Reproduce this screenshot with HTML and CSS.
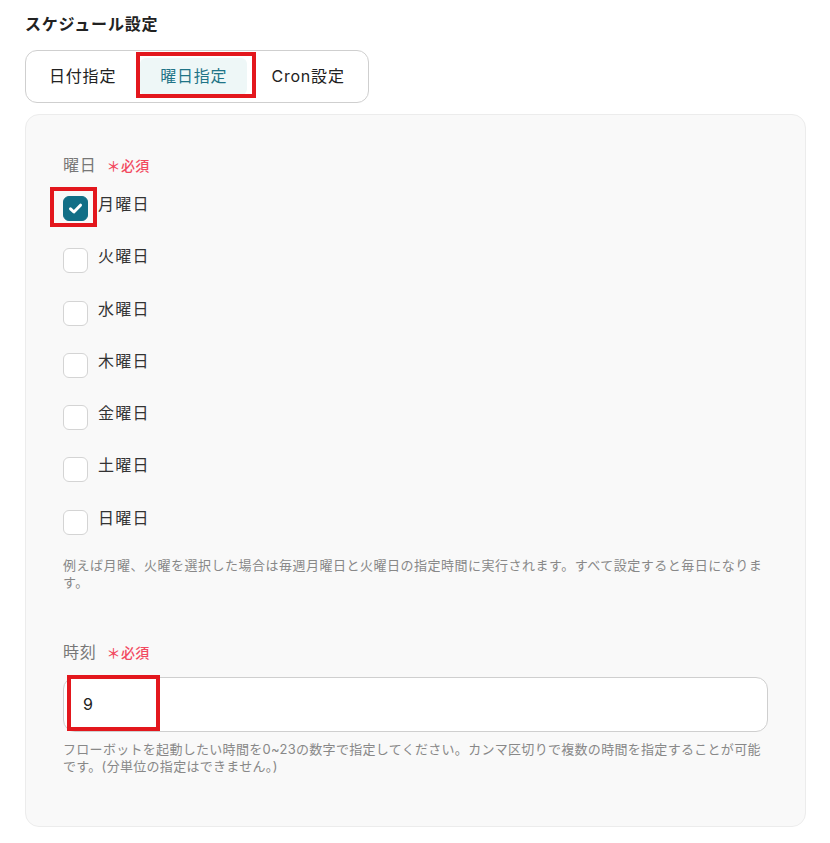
FILE: index.html
```html
<!DOCTYPE html>
<html lang="ja">
<head>
<meta charset="utf-8">
<title>スケジュール設定</title>
<link rel="stylesheet" href="styles.css">
</head>
<body>
<div class="page">
  <h2 class="title">スケジュール設定</h2>
  <div class="tabs">
    <div class="tab">日付指定</div>
    <div class="tab tab-active">曜日指定<span class="mark mark-tab"></span></div>
    <div class="tab">Cron設定</div>
  </div>

  <div class="panel">
    <div class="field-label">曜日<span class="req">＊必須</span></div>
    <div class="days">
      <label class="day">
        <span class="box box-checked">
          <svg viewBox="0 0 25 25" width="25" height="25"><path d="M7.5 12.8l3.4 3.2 6.6-6.8" fill="none" stroke="#fff" stroke-width="3" stroke-linecap="round" stroke-linejoin="round"/></svg>
          <span class="mark mark-box"></span>
        </span>
        <span class="day-text">月曜日</span>
      </label>
      <label class="day"><span class="box"></span><span class="day-text">火曜日</span></label>
      <label class="day"><span class="box"></span><span class="day-text">水曜日</span></label>
      <label class="day"><span class="box"></span><span class="day-text">木曜日</span></label>
      <label class="day"><span class="box"></span><span class="day-text">金曜日</span></label>
      <label class="day"><span class="box"></span><span class="day-text">土曜日</span></label>
      <label class="day"><span class="box"></span><span class="day-text">日曜日</span></label>
    </div>
    <p class="help help-days">例えば月曜、火曜を選択した場合は毎週月曜日と火曜日の指定時間に実行されます。すべて設定すると毎日になります。</p>

    <div class="field-label field-time">時刻<span class="req">＊必須</span></div>
    <div class="input">9<span class="mark mark-input"></span></div>
    <p class="help help-time">フローボットを起動したい時間を0~23の数字で指定してください。カンマ区切りで複数の時間を指定することが可能です。(分単位の指定はできません。)</p>
  </div>
</div>
</body>
</html>
```

FILE: styles.css
```css
* { box-sizing: border-box; }

body {
  margin: 0;
  background: #fff;
  font-family: Inter, "Noto Sans CJK JP", sans-serif;
  color: #222;
}

.page {
  padding: 12px 24px 0 25px;
}

.title {
  margin: 0;
  font-size: 16px;
  line-height: 24px;
  font-weight: 600;
  letter-spacing: 0.8px;
}

.tabs {
  margin-top: 14px;
  display: inline-flex;
  gap: 4px;
  padding: 7px 3px;
  border: 1px solid #cfcfcf;
  border-radius: 12px;
  background: #fff;
}

.tab {
  position: relative;
  padding: 0 20px;
  height: 37px;
  line-height: 37px;
  font-size: 16px;
  letter-spacing: 0.8px;
  color: #222;
  border-radius: 6px;
}

.tab-active {
  background: #eef7f7;
  color: #1f7487;
}

.mark {
  position: absolute;
  border: 4px solid #e3171d;
  pointer-events: none;
}

.mark-tab {
  left: -4px;
  right: -9px;
  top: -6px;
  bottom: -3px;
}

.panel {
  margin-top: 11px;
  background: #f9f9f9;
  border: 1px solid #ececec;
  border-radius: 14px;
  padding: 38px 37px 50px 37px;
}

.field-label {
  font-size: 16px;
  line-height: 24px;
  color: #777;
  letter-spacing: 0.8px;
}

.req {
  margin-left: 10px;
  font-size: 14px;
  color: #f24a60;
  font-weight: 500;
  letter-spacing: 0.3px;
}

.days {
  margin-top: 14px;
  display: flex;
  flex-direction: column;
  gap: 28.3px;
}

.day {
  display: flex;
  align-items: flex-start;
  gap: 10px;
  height: 24px;
}

.box {
  position: relative;
  flex: none;
  width: 25px;
  height: 25px;
  margin-top: 4px;
  border: 1px solid #d4d4d4;
  border-radius: 6px;
  background: #fff;
}

.box-checked {
  background: #116e86;
  border-color: #116e86;
}

.box-checked svg {
  position: absolute;
  left: -1px;
  top: -1px;
}

.mark-box {
  left: -14px;
  right: -10px;
  top: -10px;
  bottom: -7px;
}

.day-text {
  font-size: 16px;
  line-height: 24px;
  color: #333;
  letter-spacing: 1.2px;
}

.help {
  margin: 0;
  font-size: 13px;
  line-height: 17.5px;
  color: #888;
  letter-spacing: 0.5px;
}

.help-days {
  margin-top: 27px;
}

.field-time {
  margin-top: 48px;
}

.input {
  position: relative;
  margin-top: 12px;
  height: 55px;
  border: 1px solid #cfcfcf;
  border-radius: 12px;
  background: #fff;
  padding-left: 19px;
  line-height: 53px;
  font-size: 16px;
  color: #222;
}

.mark-input {
  left: 3px;
  top: -3px;
  width: 93px;
  height: 56px;
}

.help-time {
  margin-top: 9px;
  letter-spacing: 0.3px;
}
```
